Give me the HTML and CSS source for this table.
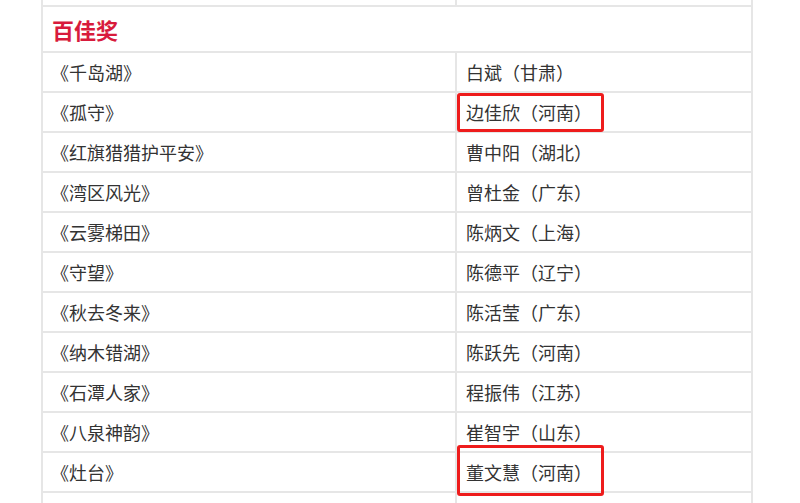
FILE: index.html
```html
<!DOCTYPE html>
<html lang="zh">
<head>
<meta charset="utf-8">
<link rel="stylesheet" href="styles.css">
</head>
<body>
<div class="wrap">
  <div class="table">
    <div class="row top"><div class="cell l"></div><div class="cell r"></div></div>
    <div class="row head"><div class="cell full">百佳奖</div></div>
    <div class="row"><div class="cell l">《千岛湖》</div><div class="cell r">白斌（甘肃）</div></div>
    <div class="row"><div class="cell l">《孤守》</div><div class="cell r">边佳欣（河南）</div></div>
    <div class="row"><div class="cell l">《红旗猎猎护平安》</div><div class="cell r">曹中阳（湖北）</div></div>
    <div class="row"><div class="cell l">《湾区风光》</div><div class="cell r">曾杜金（广东）</div></div>
    <div class="row"><div class="cell l">《云雾梯田》</div><div class="cell r">陈炳文（上海）</div></div>
    <div class="row"><div class="cell l">《守望》</div><div class="cell r">陈德平（辽宁）</div></div>
    <div class="row"><div class="cell l">《秋去冬来》</div><div class="cell r">陈活莹（广东）</div></div>
    <div class="row"><div class="cell l">《纳木错湖》</div><div class="cell r">陈跃先（河南）</div></div>
    <div class="row"><div class="cell l">《石潭人家》</div><div class="cell r">程振伟（江苏）</div></div>
    <div class="row"><div class="cell l">《八泉神韵》</div><div class="cell r">崔智宇（山东）</div></div>
    <div class="row"><div class="cell l">《灶台》</div><div class="cell r">董文慧（河南）</div></div>
    <div class="row"><div class="cell l"></div><div class="cell r"></div></div>
  </div>
  <div class="mark mark1"></div>
  <div class="mark mark2"></div>
</div>
</body>
</html>
```

FILE: styles.css
```css
html, body {
  margin: 0;
  padding: 0;
  background: #fff;
  overflow: hidden;
}
body {
  font-family: "Noto Sans CJK SC", "Microsoft YaHei", sans-serif;
  color: #333;
  font-size: 18px;
}
.wrap {
  position: relative;
  width: 800px;
  height: 503px;
  overflow: hidden;
}
.table {
  margin-left: 41px;
  width: 712px;
  border-left: 2px solid #e6e6e6;
  border-right: 2px solid #e6e6e6;
  box-sizing: border-box;
}
.row {
  display: flex;
  height: 40px;
  box-sizing: border-box;
  border-bottom: 2px solid #e6e6e6;
}
.row.top {
  height: 7px;
}
.row.head {
  height: 46px;
}
.cell {
  display: flex;
  align-items: center;
  padding-left: 8px;
  box-sizing: border-box;
  white-space: nowrap;
}
.cell.l {
  width: 414px;
  border-right: 2px solid #e6e6e6;
}
.cell.r {
  flex: 1;
  padding-left: 9px;
}
.cell.full {
  flex: 1;
  padding-left: 9px;
  font-size: 22px;
  font-weight: bold;
  color: #d81b3c;
}
.mark {
  position: absolute;
  border: 3px solid #ee1c1c;
  border-radius: 3px;
  box-sizing: border-box;
}
.mark1 {
  left: 457px;
  top: 93px;
  width: 147px;
  height: 39px;
}
.mark2 {
  left: 457px;
  top: 445px;
  width: 147px;
  height: 51px;
}
```
